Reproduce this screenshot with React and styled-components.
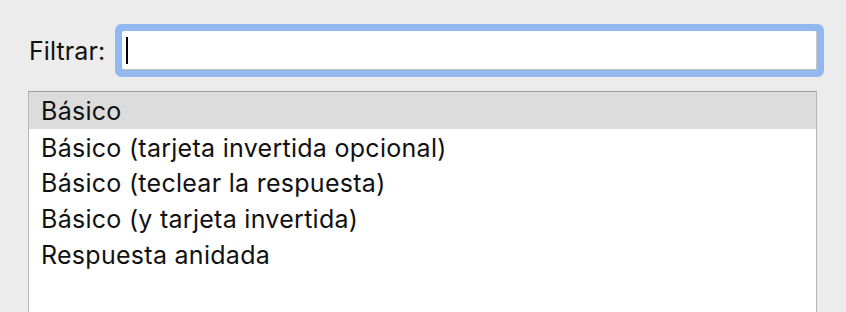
import styled, { createGlobalStyle } from "styled-components";

const GlobalStyle = createGlobalStyle`
  html, body {
    margin: 0;
    padding: 0;
    background: #ececec;
  }
  body {
    font-family: Inter, "Noto Sans", "Liberation Sans", sans-serif;
    color: #111;
    -webkit-font-smoothing: antialiased;
  }
`;

const Container = styled.div`
  height: 312px;
  overflow: hidden;
  padding: 31px 29px 0 28px;
  box-sizing: border-box;
`;

const FilterRow = styled.div`
  display: flex;
  align-items: center;
  height: 39px;
`;

const Label = styled.span`
  width: 94px;
  padding-left: 1px;
  box-sizing: border-box;
  font-size: 25px;
  letter-spacing: 0.1px;
`;

const Input = styled.div`
  flex: 1;
  height: 100%;
  box-sizing: border-box;
  background: #fff;
  border-radius: 2px;
  border-bottom: 1px solid #bdbdbd;
  border-right: 1px solid #c6c6c6;
  box-shadow: 0 0 0 7px #93b8ef;
  display: flex;
  align-items: center;
  padding-left: 4px;
`;

const Caret = styled.span`
  width: 2px;
  height: 27px;
  background: #000;
`;

const List = styled.ul`
  list-style: none;
  margin: 21px 0 0;
  padding: 0;
  height: 240px;
  background: #fff;
  border: 1px solid #b6b6b6;
  border-top-color: #9c9c9c;
  border-bottom: none;
`;

const Item = styled.li`
  height: 36px;
  line-height: 36px;
  padding-left: 12px;
  font-size: 25px;
  letter-spacing: 0.28px;
  white-space: nowrap;
  background: ${(props) => (props.selected ? "#dcdcdc" : "transparent")};
  &:first-child {
    height: 37px;
    line-height: 38px;
  }
  &:nth-child(2) {
    line-height: 38px;
  }
`;

const items = [
  "Básico",
  "Básico (tarjeta invertida opcional)",
  "Básico (teclear la respuesta)",
  "Básico (y tarjeta invertida)",
  "Respuesta anidada",
];

const App = () => {
  return (
    <Container>
      <GlobalStyle />
      <FilterRow>
        <Label>Filtrar:</Label>
        <Input>
          <Caret />
        </Input>
      </FilterRow>
      <List>
        {items.map((name, i) => (
          <Item key={name} selected={i === 0}>
            {name}
          </Item>
        ))}
      </List>
    </Container>
  );
};

export default App;
